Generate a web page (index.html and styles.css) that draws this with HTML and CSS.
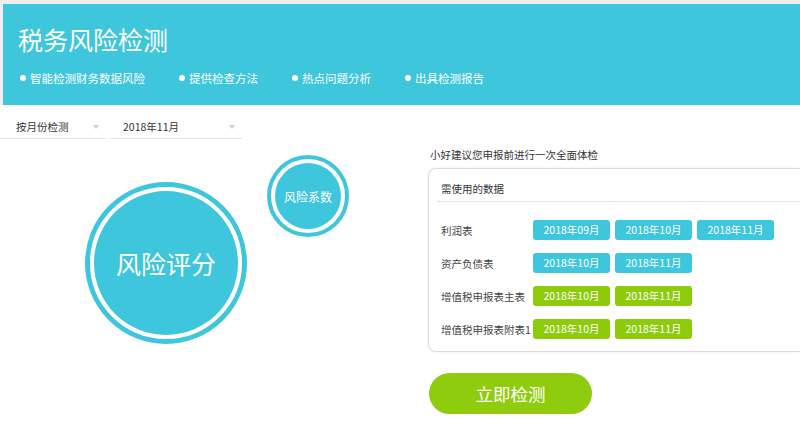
FILE: index.html
```html
<!DOCTYPE html>
<html lang="zh-CN">
<head>
    <meta charset="UTF-8">
    <meta name="viewport" content="width=device-width, initial-scale=1.0">
    <title>税务风险检测</title>
    <link rel="stylesheet" href="styles.css">
</head>
<body>
    <div class="header">
        <h1>税务风险检测</h1>
        <ul class="features">
            <li><span class="dot"></span>智能检测财务数据风险</li>
            <li><span class="dot"></span>提供检查方法</li>
            <li><span class="dot"></span>热点问题分析</li>
            <li><span class="dot"></span>出具检测报告</li>
        </ul>
    </div>
    <div class="main">
        <div class="left">
            <div class="filters">
                <div class="select select-mode">按月份检测<span class="caret"></span></div>
                <div class="select select-month">2018年11月<span class="caret"></span></div>
            </div>
            <div class="circles">
                <div class="circle circle-big"><span>风险评分</span></div>
                <div class="circle circle-small"><span>风险系数</span></div>
            </div>
        </div>
        <div class="right">
            <p class="tip">小好建议您申报前进行一次全面体检</p>
            <div class="card">
                <div class="card-title">需使用的数据</div>
                <div class="card-body">
                    <div class="data-row">
                        <span class="label">利润表</span>
                        <span class="tag">2018年09月</span>
                        <span class="tag">2018年10月</span>
                        <span class="tag">2018年11月</span>
                    </div>
                    <div class="data-row">
                        <span class="label">资产负债表</span>
                        <span class="tag">2018年10月</span>
                        <span class="tag">2018年11月</span>
                    </div>
                    <div class="data-row">
                        <span class="label">增值税申报表主表</span>
                        <span class="tag green">2018年10月</span>
                        <span class="tag green">2018年11月</span>
                    </div>
                    <div class="data-row">
                        <span class="label">增值税申报表附表1</span>
                        <span class="tag green">2018年10月</span>
                        <span class="tag green">2018年11月</span>
                    </div>
                </div>
            </div>
            <button class="check-btn">立即检测</button>
        </div>
    </div>
</body>
</html>
```

FILE: styles.css
```css
body {
    font-family: "Noto Sans CJK SC", "Noto Sans", sans-serif;
    background-color: #fff;
    color: #333;
    margin: 0;
    padding: 0;
    overflow: hidden;
}
.header {
    background-color: #3ec6dc;
    border-top: 4px solid #eee;
    border-left: 3px solid #eee;
    color: #fff;
    padding: 20px 0 19px 15px;
}
h1 {
    margin: 0;
    font-size: 25px;
    line-height: 30px;
    font-weight: normal;
}
.features {
    list-style: none;
    margin: 16px 0 0;
    padding: 0 0 0 2px;
    display: flex;
    gap: 34px;
    font-size: 11.5px;
    line-height: 16px;
}
.features li {
    display: flex;
    align-items: center;
}
.dot {
    width: 6px;
    height: 6px;
    border-radius: 50%;
    background-color: #fff;
    margin-right: 4px;
}

.main {
    display: flex;
}
.left {
    width: 420px;
    flex-shrink: 0;
}
.filters {
    display: flex;
}
.select {
    display: flex;
    justify-content: space-between;
    align-items: center;
    font-size: 10.5px;
    line-height: 14px;
    padding: 15px 8px 4px 16px;
    border-bottom: 1px solid #e6e6e6;
    box-sizing: border-box;
}
.select-mode {
    width: 107px;
    margin-right: 3px;
}
.select-month {
    width: 132px;
    padding-left: 13px;
    padding-right: 7px;
}
.caret {
    width: 0;
    height: 0;
    border-left: 3px solid transparent;
    border-right: 3px solid transparent;
    border-top: 4px solid #cfcfcf;
}

.circles {
    display: flex;
    align-items: flex-start;
}
.circle {
    border-radius: 50%;
    border: 5px solid #3ec6dc;
    padding: 4px;
    background-color: #3ec6dc;
    background-clip: content-box;
    box-sizing: border-box;
    display: flex;
    align-items: center;
    justify-content: center;
    color: #fff;
}
.circle-big {
    width: 162px;
    height: 162px;
    margin: 43px 0 0 85px;
    font-size: 25px;
}
.circle-small {
    width: 82px;
    height: 82px;
    border-width: 4px;
    margin: 16px 0 0 20px;
    font-size: 12px;
}

.right {
    flex: 1;
    margin-left: 8px;
    padding-top: 43px;
}
.tip {
    margin: 0 0 6px 2px;
    font-size: 10.5px;
    line-height: 14px;
}
/* card is cut off by the right edge of the window */
.card {
    border: 1px solid #ddd;
    border-right: none;
    border-radius: 8px 0 0 8px;
    box-shadow: 0 0 3px rgba(0, 0, 0, 0.08);
    padding: 0 0 12px 8px;
}
.card-title {
    font-size: 10.5px;
    line-height: 14px;
    padding: 13px 0 5px 4px;
    border-bottom: 1px solid #e2e2e2;
}
.card-body {
    padding: 18px 0 0 4px;
    display: flex;
    flex-direction: column;
    gap: 13px;
}
.data-row {
    display: flex;
    align-items: center;
    gap: 5px;
    height: 20px;
}
.label {
    width: 87px;
    flex-shrink: 0;
    white-space: nowrap;
    font-size: 10.5px;
    color: #444;
}
.tag {
    width: 77px;
    height: 20px;
    line-height: 20px;
    text-align: center;
    border-radius: 3px;
    background-color: #3ec6dc;
    color: #fff;
    font-size: 10.5px;
}
.tag.green {
    background-color: #8dcb0c;
}
.check-btn {
    margin: 21px 0 0 1px;
    width: 163px;
    height: 41px;
    border: none;
    border-radius: 21px;
    background-color: #8fcc0e;
    color: #fff;
    font-family: inherit;
    font-size: 17.5px;
    cursor: pointer;
}
```
